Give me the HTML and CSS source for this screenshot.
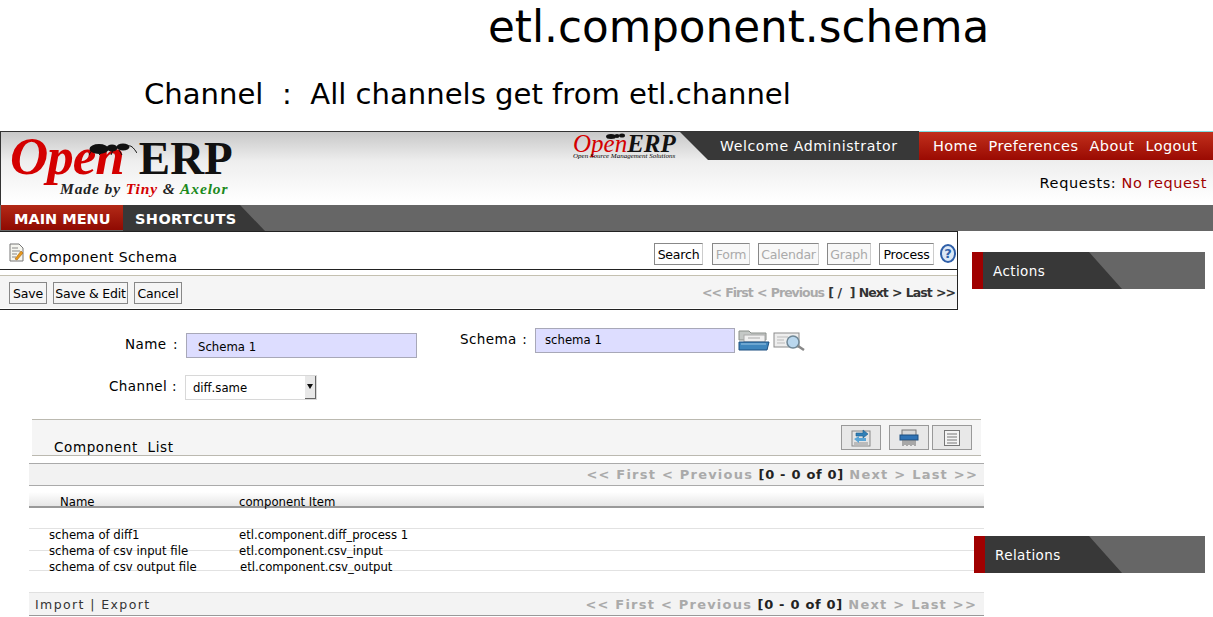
FILE: index.html
```html
<!DOCTYPE html>
<html lang="en">
<head>
    <meta charset="UTF-8">
    <meta name="viewport" content="width=device-width, initial-scale=1.0">
    <title>etl.component.schema</title>
    <link rel="stylesheet" href="styles.css">
</head>
<body>
    <h1 class="slide-title">etl.component.schema</h1>
    <p class="slide-sub">Channel  :  All channels get from etl.channel</p>

    <div class="app">
        <div class="header">
            <div class="logo">
                <div class="logo-main">
                    <span class="logo-open">Open</span><span class="logo-erp">ERP</span>
                    <svg class="logo-ant" width="48" height="14" viewBox="0 0 48 14">
                        <path d="M0 13C3 7 6 5 10 5M38 4C42 3 44 5 48 11M14 9L10 13M24 8L22 13M30 8L33 13" fill="none" stroke="#111" stroke-width="1"/>
                        <ellipse cx="10" cy="7" rx="9.500" ry="5" fill="#111"/>
                        <ellipse cx="23" cy="6" rx="5.500" ry="3.500" fill="#111"/>
                        <ellipse cx="34" cy="5" rx="6.500" ry="3.500" fill="#111"/>
                    </svg>
                </div>
                <div class="logo-by">Made by <span class="red">Tiny</span> &amp; <span class="green">Axelor</span></div>
            </div>
            <div class="header-right">
                <div class="top-bar">
                    <div class="small-logo">
                        <div class="small-name"><span class="red">Open</span>ERP</div>
                        <div class="small-tag">Open Source Management Solutions</div>
                        <svg class="small-ant" width="20" height="6" viewBox="0 0 20 6">
                            <ellipse cx="5" cy="3.500" rx="5" ry="2.500" fill="#111"/>
                            <ellipse cx="11" cy="3" rx="2.500" ry="2" fill="#111"/>
                            <ellipse cx="16" cy="2.500" rx="3" ry="2" fill="#111"/>
                        </svg>
                    </div>
                    <div class="welcome">Welcome Administrator</div>
                    <div class="top-links">
                        <a>Home</a><a>Preferences</a><a>About</a><a>Logout</a>
                    </div>
                </div>
                <div class="requests">Requests: <span class="no-req">No request</span></div>
            </div>
        </div>

        <div class="nav">
            <div class="nav-main">MAIN MENU</div>
            <div class="nav-short">SHORTCUTS</div>
        </div>

        <div class="main">
            <div class="content">
                <div class="panel">
                    <div class="panel-title">
                        <svg class="page-icon" width="15" height="20" viewBox="0 0 15 20">
                            <path d="M1 1H10L14 5V18H1Z" fill="#f6f6f0" stroke="#777"/>
                            <path d="M3 5H9M3 8H11M3 11H8M3 14H7" stroke="#888"/>
                            <path d="M6 16L12 8L14 10L8 17Z" fill="#e89a1c" stroke="#a85f08" stroke-width=".6"/>
                        </svg>
                        <span class="panel-name">Component Schema</span>
                        <div class="views">
                            <button class="view view-search">Search</button>
                            <button class="view view-form off">Form</button>
                            <button class="view view-calendar off">Calendar</button>
                            <button class="view view-graph off">Graph</button>
                            <button class="view view-process">Process</button>
                            <span class="help">?</span>
                        </div>
                    </div>
                    <div class="panel-actions">
                        <button class="act act-save">Save</button>
                        <button class="act act-edit">Save &amp; Edit</button>
                        <button class="act act-cancel">Cancel</button>
                        <div class="panel-pager"><span class="dim">&lt;&lt; First &lt; Previous</span> [ / &nbsp;] Next &gt; Last &gt;&gt;</div>
                    </div>
                </div>

                <div class="form">
                    <div class="form-row">
                        <label class="lbl lbl-name">Name :</label>
                        <div class="field field-name">Schema 1</div>
                        <label class="lbl lbl-schema">Schema :</label>
                        <div class="field field-schema">schema 1</div>
                        <svg class="folder" width="32" height="21" viewBox="0 0 32 21">
                            <path d="M1 1H11L13 3H28V10H1Z" fill="#c4c8c6" stroke="#8a8f8a"/>
                            <rect x="6" y="5" width="21" height="7" fill="#f0f0f0" stroke="#aaa"/>
                            <path d="M10 8H22" stroke="#aaa"/>
                            <path d="M1 12H31L29 20H1Z" fill="#3f86bd" stroke="#1c4f80"/>
                            <path d="M3 14H28" stroke="#9cc6e4"/>
                        </svg>
                        <svg class="lens" width="33" height="20" viewBox="0 0 33 20">
                            <rect x="1" y="2" width="25" height="14" fill="#eeeeee" stroke="#8c8c8c"/>
                            <path d="M4 6H15M4 9H11M4 12H12" stroke="#bbb"/>
                            <circle cx="20" cy="11" r="6" fill="#b9d7ee" stroke="#6f8796" stroke-width="1.500"/>
                            <path d="M25 15L31 19" stroke="#888" stroke-width="2.500"/>
                        </svg>
                    </div>
                    <div class="form-row row-channel">
                        <label class="lbl lbl-channel">Channel :</label>
                        <div class="select">
                            <span class="select-val">diff.same</span>
                            <span class="select-btn"></span>
                        </div>
                    </div>
                </div>

                <div class="list">
                    <div class="list-head">
                        <span class="list-name">Component  List</span>
                        <div class="list-tools">
                            <button class="tool">
                                <svg width="22" height="20" viewBox="0 0 22 20">
                                    <rect x="2" y="3" width="18" height="15" fill="#e4e4e4" stroke="#888"/>
                                    <rect x="4" y="14" width="14" height="3" fill="#bbb"/>
                                    <path d="M6 5H13V2L18 6L13 10V8H6Z" fill="#2f7fb8" stroke="#1d5a88" stroke-width=".6"/>
                                    <path d="M16 13H9V15L4 11L9 8V10H16Z" fill="#5aa5d6"/>
                                </svg>
                            </button>
                            <button class="tool">
                                <svg width="22" height="20" viewBox="0 0 22 20">
                                    <rect x="4" y="2" width="14" height="6" fill="#d8d8d8" stroke="#777"/>
                                    <rect x="2" y="7" width="18" height="5" fill="#2f73b5" stroke="#1c4f80"/>
                                    <path d="M5 12V18M7 12V17M9 12V18M11 12V17M13 12V18M15 12V17M17 12V18" stroke="#666"/>
                                </svg>
                            </button>
                            <button class="tool">
                                <svg width="18" height="18" viewBox="0 0 18 18">
                                    <rect x="1.500" y="1.500" width="15" height="15" fill="#f4f4f4" stroke="#777"/>
                                    <path d="M4 5H14M4 8H14M4 11H14M4 14H14" stroke="#777"/>
                                </svg>
                            </button>
                        </div>
                    </div>
                    <div class="pager pager-top">
                        <span class="dim">&lt;&lt; First &lt; Previous</span> <b>[0 - 0 of 0]</b> <span class="dim">Next &gt; Last &gt;&gt;</span>
                    </div>
                    <div class="columns">
                        <span class="col-name">Name</span>
                        <span class="col-item">component Item</span>
                    </div>
                    <div class="rows">
                        <div class="row"><span class="cell-name">schema of diff1</span><span>etl.component.diff_process 1</span></div>
                        <div class="row"><span class="cell-name">schema of csv input file</span><span>etl.component.csv_input</span></div>
                        <div class="row"><span class="cell-name">schema of csv output file</span><span class="nudge">etl.component.csv_output</span></div>
                    </div>
                    <div class="pager pager-foot">
                        <span class="import">Import | Export</span>
                        <span class="pager-right"><span class="dim">&lt;&lt; First &lt; Previous</span> <b>[0 - 0 of 0]</b> <span class="dim">Next &gt; Last &gt;&gt;</span></span>
                    </div>
                </div>
            </div>

            <div class="sidebar">
                <div class="side-box">
                    <span class="side-mark"></span>
                    <span class="side-title">Actions</span>
                </div>
                <div class="side-box side-rel">
                    <span class="side-mark"></span>
                    <span class="side-title">Relations</span>
                </div>
            </div>
        </div>
    </div>
</body>
</html>
```

FILE: styles.css
```css
body {
    margin: 0;
    font-family: "DejaVu Sans", sans-serif;
    background-color: #ffffff;
    color: #000000;
    overflow: hidden;
}
button {
    font-family: inherit;
    cursor: pointer;
}
.red { color: #d40000; }
.green { color: #1c8a1c; }

/* slide heading */
.slide-title {
    margin: 0;
    padding-left: 488px;
    font-size: 43.650px;
    font-weight: normal;
    line-height: 54px;
}
.slide-sub {
    margin: 13px 0 0;
    padding-left: 144px;
    font-size: 29.100px;
    line-height: 54px;
    height: 64px;
    white-space: pre;
}

/* header */
.app {
    border-top: 1px solid #333333;
}
.header {
    display: flex;
    height: 73px;
    background: linear-gradient(#c8c8c8, #eeeeee 40%, #ffffff 95%);
    border-left: 1px solid #333333;
}
.logo {
    width: 572px;
    padding-left: 9px;
    box-sizing: border-box;
}
.logo-main {
    position: relative;
    height: 49px;
    line-height: 40px;
    padding-top: 4px;
    box-sizing: border-box;
    white-space: nowrap;
}
.logo-open {
    font-family: "Liberation Serif", serif;
    font-style: italic;
    font-weight: bold;
    font-size: 53px;
    color: #d40000;
    letter-spacing: -1px;
}
.logo-erp {
    font-family: "Liberation Serif", serif;
    font-weight: bold;
    font-size: 47px;
    margin-left: 15px;
    color: #111111;
}
.logo-ant {
    position: absolute;
    left: 79px;
    top: 10px;
}
.logo-by {
    font-family: "Liberation Serif", serif;
    font-style: italic;
    font-weight: bold;
    font-size: 15.500px;
    padding-left: 50px;
    line-height: 16px;
    letter-spacing: .9px;
    color: #222222;
}
.header-right {
    flex: 1;
}
.top-bar {
    display: flex;
    height: 28px;
}
.small-logo {
    position: relative;
    width: 107px;
    padding-top: 1px;
    box-sizing: border-box;
    font-family: "Liberation Serif", serif;
    font-style: italic;
}
.small-name {
    font-size: 25px;
    line-height: 21px;
    font-weight: bold;
    color: #111111;
}
.small-name .red {
    font-weight: normal;
}
.small-tag {
    font-size: 7px;
    line-height: 5px;
    white-space: nowrap;
}
.small-ant {
    position: absolute;
    left: 33px;
    top: 1px;
}
.welcome {
    width: 239px;
    box-sizing: border-box;
    padding-left: 40px;
    background-color: #383838;
    clip-path: polygon(0 0, 100% 0, 100% 100%, 28px 100%);
    color: #ffffff;
    font-size: 14.100px;
    line-height: 28px;
    letter-spacing: .6px;
    white-space: nowrap;
}
.top-links {
    flex: 1;
    display: flex;
    gap: 11px;
    padding-left: 14px;
    background: linear-gradient(#c1301c, #9a0a02);
    border-top: 1px solid #7fe0e0;
    margin-top: -1px;
    color: #ffffff;
    font-size: 14.500px;
    line-height: 28px;
    letter-spacing: .42px;
}
.requests {
    text-align: right;
    padding-right: 6px;
    margin-top: 13px;
    font-size: 14.500px;
    line-height: 20px;
    letter-spacing: .6px;
}
.no-req {
    color: #a00000;
}

/* nav */
.nav {
    display: flex;
    height: 26px;
    background-color: #666666;
    padding-left: 1px;
    font-size: 14.500px;
    font-weight: bold;
    color: #ffffff;
    line-height: 28px;
    letter-spacing: .4px;
}
.nav-main {
    width: 122px;
    box-sizing: border-box;
    padding-left: 13px;
    height: 25px;
    letter-spacing: 0;
    background: linear-gradient(#b32a17, #8f0a02);
}
.nav-short {
    width: 142px;
    box-sizing: border-box;
    padding-left: 12px;
    background-color: #383838;
    clip-path: polygon(0 0, 117px 0, 142px 100%, 0 100%);
}

/* main area */
.main {
    display: flex;
}
.content {
    width: 984px;
    flex: none;
}
.panel {
    width: 958px;
    box-sizing: border-box;
    height: 79px;
    border: 1px solid #222222;
    border-left: 0;
}
.panel-title {
    display: flex;
    align-items: flex-end;
    height: 37px;
    border-bottom: 1px solid #222222;
    padding-left: 9px;
}
.page-icon {
    margin-bottom: 6px;
}
.panel-name {
    margin-left: 5px;
    font-size: 14px;
    line-height: 24px;
    letter-spacing: .4px;
}
.views {
    margin-left: auto;
    display: flex;
    align-self: flex-start;
    padding-top: 11px;
    gap: 9px;
}
.view, .act {
    padding: 0;
    height: 22px;
    border: 1px solid #888888;
    background-color: #ffffff;
    color: #000000;
    font-size: 12.500px;
    letter-spacing: -.2px;
    white-space: nowrap;
}
.view {
    border-right-color: #cccccc;
}
.view-search { width: 49px; }
.view-form { width: 38px; margin-left: 0; }
.view-calendar { width: 61px; margin-left: -1px; }
.view-graph { width: 44px; margin-left: -1px; }
.view-process { width: 55px; margin-left: -1px; }
.view.off {
    color: #aaaaaa;
    background-color: #f8f8f8;
}
.help {
    width: 16px;
    height: 19px;
    margin-left: -3px;
    margin-right: 1px;
    margin-top: 1px;
    border-radius: 50%;
    box-sizing: border-box;
    border: 2px solid #2f5fa8;
    background-color: #dce8f6;
    color: #2f5fa8;
    font-size: 13px;
    font-weight: bold;
    line-height: 15px;
    text-align: center;
}
.panel-actions {
    display: flex;
    align-items: flex-start;
    gap: 6px;
    height: 33px;
    margin-top: 5px;
    padding: 6px 0 0 9px;
    box-sizing: border-box;
    border-top: 1px solid #c4c0b0;
    background-color: #f5f5f5;
}
.act {
    background-color: #f5f5f5;
}
.act-save { width: 38px; }
.act-edit { width: 75px; }
.act-cancel { width: 48px; }
.panel-pager {
    margin-left: auto;
    padding-right: 2px;
    font-size: 12.500px;
    font-weight: bold;
    letter-spacing: -1px;
    word-spacing: 1px;
    line-height: 22px;
    color: #333333;
    white-space: nowrap;
}
.dim {
    color: #aaaaaa;
}

/* form */
.form {
    height: 109px;
}
.form-row {
    display: flex;
    align-items: flex-start;
}
.lbl {
    font-size: 13.500px;
    line-height: 20px;
    letter-spacing: .4px;
    white-space: nowrap;
    box-sizing: border-box;
}
.lbl-name {
    width: 61px;
    margin: 24px 0 0 125px;
    word-spacing: 2px;
}
.field {
    box-sizing: border-box;
    height: 25px;
    padding-left: 11px;
    background-color: #ddddff;
    border: 1px solid #a8a8b8;
    font-size: 11.700px;
    line-height: 26px;
}
.field-name {
    width: 231px;
    margin-top: 23px;
}
.lbl-schema {
    width: 75px;
    margin: 19px 0 0 43px;
    word-spacing: 1px;
}
.field-schema {
    width: 200px;
    margin-top: 18px;
    padding-left: 9px;
    line-height: 22px;
}
.folder {
    margin: 20px 0 0 3px;
}
.lens {
    margin: 21px 0 0 3px;
}
.row-channel {
    margin-top: 17px;
}
.lbl-channel {
    margin: 1px 0 0 109px;
}
.select {
    display: flex;
    justify-content: space-between;
    width: 132px;
    height: 25px;
    margin-left: 8px;
    box-sizing: border-box;
    border: 1px solid #d8d8d8;
    background-color: #ffffff;
    font-size: 11.700px;
    line-height: 24px;
}
.select-val {
    padding-left: 7px;
}
.select-btn {
    position: relative;
    width: 11px;
    height: 23px;
    background-color: #e8e8e8;
    border-right: 1px solid #666666;
    border-bottom: 1px solid #666666;
    box-sizing: border-box;
}
.select-btn::after {
    content: "";
    position: absolute;
    left: 2px;
    top: 8px;
    border: 3px solid transparent;
    border-top: 5px solid #111111;
    border-bottom: 0;
}

/* list */
.list {
    margin-left: 29px;
}
.list-head {
    display: flex;
    justify-content: space-between;
    box-sizing: border-box;
    width: 949px;
    height: 37px;
    margin-left: 3px;
    background-color: #f5f5f5;
    border-top: 1px solid #bbb9b0;
    border-bottom: 1px solid #bbb9b0;
}
.list-name {
    padding: 19px 0 0 22px;
    font-size: 13.500px;
    line-height: 17px;
    letter-spacing: .6px;
    white-space: pre;
}
.list-tools {
    display: flex;
    gap: 8px;
    padding: 5px 9px 0 0;
}
.tool {
    width: 40px;
    height: 25px;
    padding: 0;
    border: 1px solid #999999;
    background-color: #e8e8e8;
    display: flex;
    align-items: center;
    justify-content: center;
}
.tool:last-child {
    margin-left: -5px;
}
.pager {
    box-sizing: border-box;
    font-size: 13px;
    letter-spacing: 1.220px;
    color: #222222;
    white-space: nowrap;
}
.pager .dim {
    font-weight: bold;
    color: #aaaaaa;
}
.pager b {
    letter-spacing: .7px;
}
.pager-top {
    height: 23px;
    margin-top: 7px;
    padding-right: 6px;
    text-align: right;
    line-height: 22px;
    background-color: #f2f2f2;
    border-top: 1px solid #aaaaaa;
    border-bottom: 1px solid #aaaaaa;
}
.columns {
    display: flex;
    box-sizing: border-box;
    height: 22px;
    background: linear-gradient(#ffffff, #ffffff 30%, #e6e6e6);
    border-bottom: 2px solid #999999;
    font-size: 11.700px;
    line-height: 32px;
}
.col-name {
    width: 210px;
    padding-left: 31px;
    box-sizing: border-box;
}
.rows {
    height: 84px;
    padding-top: 19px;
    box-sizing: border-box;
    background:
        linear-gradient(#e2e2e2, #e2e2e2) 0 20px / 100% 1px no-repeat,
        linear-gradient(#e2e2e2, #e2e2e2) 0 42px / 100% 1px no-repeat,
        linear-gradient(#e2e2e2, #e2e2e2) 0 62px / 100% 1px no-repeat;
}
.row {
    display: flex;
    font-size: 11.700px;
    line-height: 16px;
}
.cell-name {
    width: 210px;
    padding-left: 20px;
    box-sizing: border-box;
}
.nudge {
    padding-left: 1px;
}
.pager-foot {
    display: flex;
    justify-content: space-between;
    height: 24px;
    padding: 0 7px;
    line-height: 23px;
    background-color: #f3f3f3;
    border-top: 1px solid #e0e0e0;
    border-bottom: 1px solid #999999;
}
.import {
    font-size: 12.500px;
    letter-spacing: 1.400px;
    margin-left: -1px;
    color: #333333;
}

/* sidebar lies partly over the list */
.sidebar {
    flex: 1;
    margin-left: -12px;
    margin-right: 8px;
    padding-top: 21px;
    position: relative;
}
.side-box {
    display: flex;
    height: 37px;
    background-color: #666666;
    color: #ffffff;
    font-size: 13.500px;
    line-height: 38px;
    letter-spacing: .4px;
}
.side-mark {
    width: 11px;
    background-color: #a00000;
}
.side-title {
    width: 139px;
    box-sizing: border-box;
    padding-left: 10px;
    background-color: #383838;
    clip-path: polygon(0 0, calc(100% - 33px) 0, 100% 100%, 0 100%);
}
.side-rel {
    margin: 247px 0 0 2px;
}
.side-rel .side-title {
    width: 137px;
}
```
